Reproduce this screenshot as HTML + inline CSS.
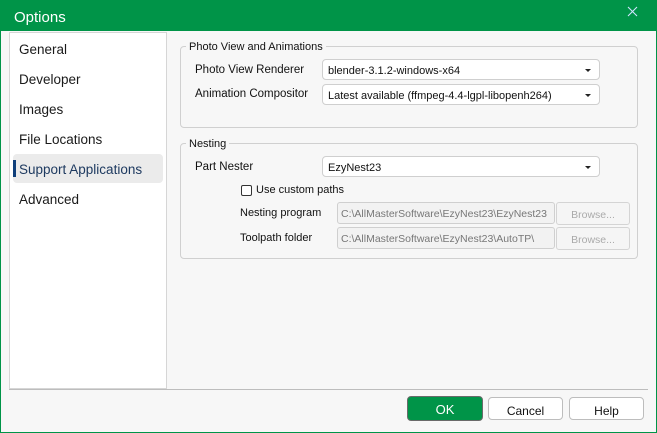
<!DOCTYPE html>
<html><head><style>
*{box-sizing:border-box;margin:0;padding:0}
body{width:657px;height:433px;background:#009448;font-family:"Liberation Sans",sans-serif;position:relative;overflow:hidden}
.a{position:absolute}
#main{left:1px;top:31px;width:655px;height:401px;background:#f7f7f7}
.t{color:#fff;font-size:15px}
#list{left:9px;top:32px;width:158px;height:357px;background:#fff;border:1px solid #d6d6d6}
.li{position:absolute;left:9px;font-size:13.5px;color:#1a1a1a}
.sel{left:13px;top:154px;width:150px;height:29px;background:#ebebeb;border-radius:4px}
.bar{left:13px;top:160px;width:3px;height:17px;background:#0f3f7a}
.grp{border:1px solid #d0d0d0;border-radius:4px}
.gl{font-size:11px;color:#111;background:#f7f7f7;padding:0 3px}
.lb{font-size:11.5px;color:#111}
.sl{font-size:11px;color:#111}
.cb{background:#fff;border:1px solid #cfcfcf;border-radius:4px;font-size:11px;color:#111;padding:5px 0 0 5px}
.cb:after{content:"";position:absolute;right:8px;top:9px;border-left:3px solid transparent;border-right:3px solid transparent;border-top:3px solid #222}
.tx{background:#f2f2f2;border:1px solid #cfcfcf;border-radius:3px;font-size:10.5px;color:#777;padding:5px 0 0 3px;white-space:nowrap;overflow:hidden}
.br{background:#f5f5f5;border:1px solid #d4d4d4;border-radius:3px;font-size:10.5px;color:#aaa;text-align:center;padding-top:6px}
.btn{background:#fff;border:1px solid #bdbdbd;border-radius:4px;font-size:12px;color:#111;text-align:center;padding-top:5px}
</style></head><body>
<div class="a t" style="left:14px;top:9px">Options</div>
<svg class="a" style="left:627px;top:6px" width="11" height="11"><path d="M1 1L10 10M10 1L1 10" stroke="#cfe3ff" stroke-width="1.1"/></svg>
<div class="a" id="main"></div>
<div class="a" id="list"></div>
<div class="a sel"></div><div class="a bar"></div>
<div class="li" style="left:19px;top:42px">General</div>
<div class="li" style="left:19px;top:72px">Developer</div>
<div class="li" style="left:19px;top:102px">Images</div>
<div class="li" style="left:19px;top:132px">File Locations</div>
<div class="li" style="left:19px;top:162px;color:#1e3a60">Support Applications</div>
<div class="li" style="left:19px;top:192px">Advanced</div>

<div class="a grp" style="left:180px;top:46px;width:458px;height:82px"></div>
<div class="a gl" style="left:186px;top:41px">Photo View and Animations</div>
<div class="a lb" style="left:195px;top:64px">Photo View Renderer</div>
<div class="a lb" style="left:195px;top:88px">Animation Compositor</div>
<div class="a cb" style="left:322px;top:59px;width:278px;height:21px">blender-3.1.2-windows-x64</div>
<div class="a cb" style="left:322px;top:84px;width:278px;height:21px">Latest available (ffmpeg-4.4-lgpl-libopenh264)</div>

<div class="a grp" style="left:180px;top:143px;width:458px;height:116px"></div>
<div class="a gl" style="left:186px;top:138px">Nesting</div>
<div class="a lb" style="left:195px;top:161px">Part Nester</div>
<div class="a cb" style="left:322px;top:156px;width:278px;height:21px">EzyNest23</div>
<div class="a" style="left:241px;top:185px;width:11px;height:11px;border:1px solid #333;border-radius:2px;background:#fff"></div>
<div class="a sl" style="left:256px;top:184px">Use custom paths</div>
<div class="a sl" style="left:240px;top:207px">Nesting program</div>
<div class="a sl" style="left:240px;top:232px">Toolpath folder</div>
<div class="a tx" style="left:337px;top:202px;width:218px;height:22px">C:\AllMasterSoftware\EzyNest23\EzyNest23</div>
<div class="a tx" style="left:337px;top:227px;width:218px;height:22px">C:\AllMasterSoftware\EzyNest23\AutoTP\</div>
<div class="a br" style="left:556px;top:202px;width:74px;height:23px">Browse...</div>
<div class="a br" style="left:556px;top:227px;width:74px;height:23px">Browse...</div>

<div class="a" style="left:9px;top:389px;width:639px;height:1px;background:#bdbdbd"></div>
<div class="a btn" style="left:407px;top:396px;width:76px;height:25px;background:#009448;color:#fff;border:1px solid #6a6a6a;font-size:13px;padding-top:5px">OK</div>
<div class="a btn" style="left:488px;top:397px;width:75px;height:23px;padding-top:6px">Cancel</div>
<div class="a btn" style="left:569px;top:397px;width:75px;height:23px;padding-top:6px">Help</div>
</body></html>
